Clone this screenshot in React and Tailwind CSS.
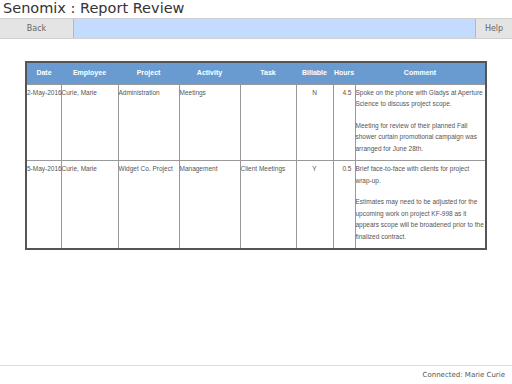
const rows = [
  {
    date: '2-May-2016',
    employee: 'Curie, Marie',
    project: 'Administration',
    activity: 'Meetings',
    task: '',
    billable: 'N',
    hours: '4.5',
    comment: [
      'Spoke on the phone with Gladys at Aperture Science to discuss project scope.',
      'Meeting for review of their planned Fall shower curtain promotional campaign was arranged for June 28th.',
    ],
  },
  {
    date: '5-May-2016',
    employee: 'Curie, Marie',
    project: 'Widget Co. Project',
    activity: 'Management',
    task: 'Client Meetings',
    billable: 'Y',
    hours: '0.5',
    comment: [
      'Brief face-to-face with clients for project wrap-up.',
      'Estimates may need to be adjusted for the upcoming work on project KF-998 as it appears scope will be broadened prior to the finalized contract.',
    ],
  },
]

const cols = [
  { label: 'Date', w: 'w-[35px]' },
  { label: 'Employee', w: 'w-[57px]' },
  { label: 'Project', w: 'w-[61px]' },
  { label: 'Activity', w: 'w-[61px]' },
  { label: 'Task', w: 'w-[56px]' },
  { label: 'Billable', w: 'w-[37px]' },
  { label: 'Hours', w: 'w-[22px]' },
  { label: 'Comment', w: 'w-[131px]' },
]

export default function App() {
  return (
    <div className="min-h-screen flex flex-col bg-white font-['DejaVu_Sans',Verdana,sans-serif]">
      {/* Title */}
      <div className="h-[18px] px-[3px] text-[14.5px] leading-[17px] text-[#333]">
        Senomix : Report Review
      </div>

      {/* Nav bar */}
      <div className="flex h-[21px] border-y border-[#d0d0d0] bg-[#c2dbfe]">
        <div className="w-[74px] flex items-center justify-center bg-[#e4e4e4] border-r border-[#b8b8b8] text-[8px] text-[#666]">
          Back
        </div>
        <div className="flex-1" />
        <div className="w-[37px] flex items-center justify-center bg-[#e4e4e4] border-l border-[#b8b8b8] text-[8px] text-[#666]">
          Help
        </div>
      </div>

      {/* Report table */}
      <div className="flex-1 flex justify-center pt-[22px]">
        <table className="h-fit w-[461px] table-fixed border-collapse border-2 border-[#555] font-['Liberation_Sans',Arial,sans-serif] text-[6.5px] text-[#555]">
          <thead>
            <tr className="h-[22px] bg-[#6a9bd0] text-white">
              {cols.map(c => (
                <th key={c.label} className={`${c.w} font-bold text-[7px] text-center p-0`}>
                  {c.label}
                </th>
              ))}
            </tr>
          </thead>
          <tbody>
            {rows.map(r => (
              <tr key={r.date} className="align-top leading-[11.5px]">
                <td className="border border-[#999] pt-[2px] px-0 whitespace-nowrap">{r.date}</td>
                <td className="border border-[#999] pt-[2px] px-0">{r.employee}</td>
                <td className="border border-[#999] pt-[2px] px-0">{r.project}</td>
                <td className="border border-[#999] pt-[2px] px-0">{r.activity}</td>
                <td className="border border-[#999] pt-[2px] px-0">{r.task}</td>
                <td className="border border-[#999] pt-[2px] px-0 text-center">{r.billable}</td>
                <td className="border border-[#999] pt-[2px] pr-[3px] text-right">{r.hours}</td>
                <td className="border border-[#999] pt-[2px] pb-[6px] px-0">
                  {r.comment.map((p, i) => (
                    <p key={i} className={i === 0 ? 'mb-[10px]' : ''}>{p}</p>
                  ))}
                </td>
              </tr>
            ))}
          </tbody>
        </table>
      </div>

      {/* Footer */}
      <div className="h-[19px] border-t border-[#ddd] flex items-center justify-end pr-[7px] text-[7px] text-[#555]">
        Connected: Marie Curie
      </div>
    </div>
  )
}
